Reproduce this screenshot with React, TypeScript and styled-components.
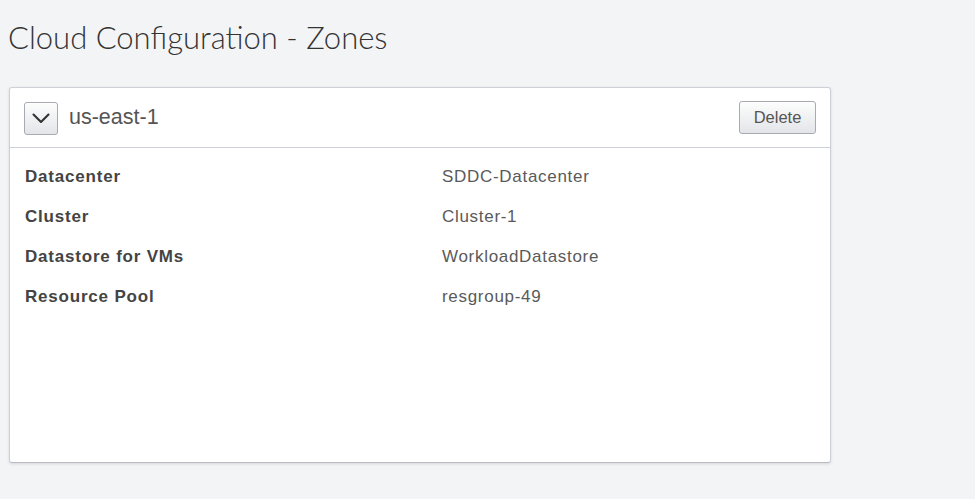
import React from "react";
import styled, { createGlobalStyle } from "styled-components";

interface ZoneField {
  label: string;
  value: string;
}

const GlobalStyle = createGlobalStyle`
  html, body {
    margin: 0;
    padding: 0;
    background: #f3f4f6;
  }
  body {
    font-family: "Liberation Sans", Arial, sans-serif;
  }
`;

const Page = styled.div`
  width: 975px;
  height: 499px;
  padding: 0 0 0 9px;
  box-sizing: border-box;
  background: #f3f4f6;
  overflow: hidden;
`;

const Title = styled.h1`
  margin: 0;
  padding: 17px 0 0 0;
  height: 70px;
  box-sizing: border-box;
  font-family: "Lato", "Open Sans", sans-serif;
  font-weight: 300;
  font-size: 31px;
  line-height: 40px;
  color: #333;
  margin-left: -1px;
`;

const Card = styled.section`
  margin-top: 17px;
  width: 822px;
  height: 376px;
  box-sizing: border-box;
  background: #fff;
  border: 1px solid #cdd0d7;
  border-bottom-color: #b9bcc5;
  border-radius: 3px;
  box-shadow: 0 1px 3px rgba(0, 0, 0, 0.12);
  display: flex;
  flex-direction: column;
`;

const CardHeader = styled.div`
  display: flex;
  align-items: center;
  height: 59px;
  padding: 0 14px 0 14px;
  border-bottom: 1px solid #cdd0d7;
`;

const ButtonBase = styled.button`
  box-sizing: border-box;
  height: 33px;
  border: 1px solid #a7aab2;
  border-radius: 3px;
  background: linear-gradient(#fdfdfd, #e3e5e9);
  box-shadow: inset 0 1px 0 #fff;
  color: #555;
  cursor: pointer;
  padding: 0;
  display: flex;
  align-items: center;
  justify-content: center;
`;

const ToggleButton = styled(ButtonBase)`
  width: 34px;
  margin-top: 1px;
`;

const DeleteButton = styled(ButtonBase)`
  width: 77px;
  margin-left: auto;
  font-family: "Liberation Sans", Arial, sans-serif;
  font-size: 16.5px;
  color: #555;
`;

const ZoneName = styled.h2`
  margin: 0 0 0 11px;
  font-weight: 400;
  font-size: 21.5px;
  color: #555;
  font-family: "Liberation Sans", Arial, sans-serif;
`;

const FieldList = styled.dl`
  margin: 0;
  padding: 9px 0 0 15px;
  display: grid;
  grid-template-columns: 417px 1fr;
  grid-auto-rows: 40px;
  align-items: center;
`;

const FieldLabel = styled.dt`
  font-weight: 700;
  font-size: 17px;
  letter-spacing: 0.8px;
  color: #444;
`;

const FieldValue = styled.dd`
  margin: 0;
  font-size: 17px;
  letter-spacing: 0.7px;
  color: #5a5a5a;
`;

const fields: ZoneField[] = [
  { label: "Datacenter", value: "SDDC-Datacenter" },
  { label: "Cluster", value: "Cluster-1" },
  { label: "Datastore for VMs", value: "WorkloadDatastore" },
  { label: "Resource Pool", value: "resgroup-49" },
];

function ChevronDown() {
  return (
    <svg width="18" height="11" viewBox="0 0 18 11" fill="none">
      <path d="M1.5 1.5 L9 9 L16.5 1.5" stroke="#333" strokeWidth="2.1" strokeLinecap="round" strokeLinejoin="round" />
    </svg>
  );
}

export default function App() {
  return (
    <Page>
      <GlobalStyle />
      <Title>Cloud Configuration - Zones</Title>
      <Card>
        <CardHeader>
          <ToggleButton aria-label="Collapse">
            <ChevronDown />
          </ToggleButton>
          <ZoneName>us-east-1</ZoneName>
          <DeleteButton>Delete</DeleteButton>
        </CardHeader>
        <FieldList>
          {fields.map((f) => (
            <React.Fragment key={f.label}>
              <FieldLabel>{f.label}</FieldLabel>
              <FieldValue>{f.value}</FieldValue>
            </React.Fragment>
          ))}
        </FieldList>
      </Card>
    </Page>
  );
}
